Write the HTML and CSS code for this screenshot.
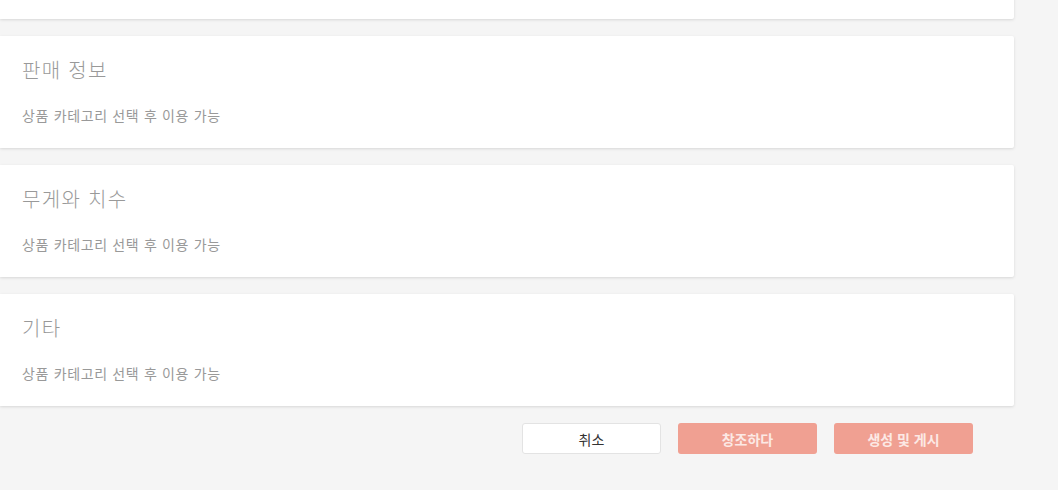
FILE: index.html
```html
<!DOCTYPE html>
<html lang="ko">
<head>
  <meta charset="UTF-8" />
  <meta name="viewport" content="width=device-width, initial-scale=1.0"/>
  <title>상품 등록</title>
  <link rel="stylesheet" href="styles.css">
</head>
<body>
  <div class="page">
    <!-- 위로 스크롤된 기본 정보 카드 -->
    <div class="section-card"></div>

    <div class="section-card">
      <h2 class="section-title">판매 정보</h2>
      <p class="section-note">상품 카테고리 선택 후 이용 가능</p>
    </div>

    <div class="section-card">
      <h2 class="section-title">무게와 치수</h2>
      <p class="section-note">상품 카테고리 선택 후 이용 가능</p>
    </div>

    <div class="section-card">
      <h2 class="section-title">기타</h2>
      <p class="section-note">상품 카테고리 선택 후 이용 가능</p>
    </div>

    <div class="form-actions">
      <button class="btn btn-cancel">취소</button>
      <button class="btn btn-primary" disabled>창조하다</button>
      <button class="btn btn-primary" disabled>생성 및 게시</button>
    </div>
  </div>
</body>
</html>
```

FILE: styles.css
```css
* { box-sizing: border-box; }
body {
  margin: 0;
  padding: 0;
  font-family: "Noto Sans CJK KR", "Noto Sans", sans-serif;
  background-color: #f5f5f5;
  color: #333;
}
.page {
  width: 1014px;
  margin-top: -93px;
  display: flex;
  flex-direction: column;
  gap: 17px;
}
.section-card {
  background: white;
  height: 112px;
  padding: 20px 22px 0;
  box-shadow: 0 1px 3px rgba(0, 0, 0, 0.12);
  border-radius: 0 2px 2px 0;
}
.section-title {
  margin: 0;
  font-size: 20px;
  font-weight: 300;
  line-height: 28px;
  letter-spacing: 1.3px;
  color: #999;
}
.section-note {
  margin: 22px 0 0;
  font-size: 14px;
  line-height: 18px;
  letter-spacing: 0.65px;
  color: #999;
}
.form-actions {
  display: flex;
  justify-content: flex-end;
  gap: 17px;
  padding-right: 41px;
}
.btn {
  width: 139px;
  height: 31px;
  border-radius: 3px;
  font-family: inherit;
  font-size: 14px;
  cursor: pointer;
}
.btn-cancel {
  background: white;
  border: 1px solid #e3e3e3;
  color: #333;
  font-weight: normal;
}
.btn-primary {
  background: #f0a092;
  border: none;
  color: #fce9e5;
  font-weight: bold;
}
.btn-primary:disabled {
  cursor: not-allowed;
}
```
